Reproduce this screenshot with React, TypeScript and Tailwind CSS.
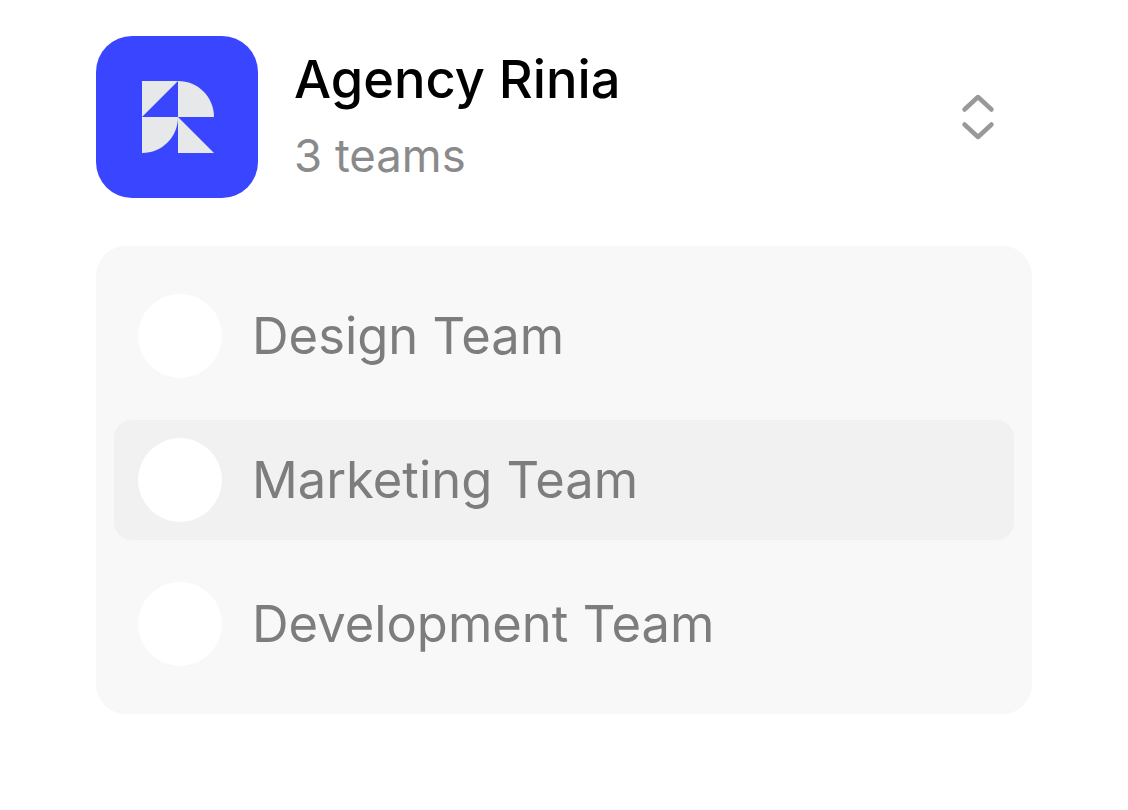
const teams = [
  { name: "Design Team", active: false },
  { name: "Marketing Team", active: true },
  { name: "Development Team", active: false },
];

const Logo = () => (
  <div className="flex h-[162px] w-[162px] shrink-0 items-center justify-center rounded-[36px] bg-[#3a45ff]">
    <svg className="ml-[2px]" width="72" height="72" viewBox="0 0 72 72" fill="#e6e8ea">
      <path d="M0 0H36L0 36Z" />
      <path d="M36 0C56 0 72 16 72 36H36Z" />
      <path d="M0 36H36C36 56 20 72 0 72Z" />
      <path d="M36 36L72 72H36Z" />
    </svg>
  </div>
);

const Chevrons = () => (
  <svg width="36" height="48" viewBox="0 0 36 48" fill="none" stroke="#999999" strokeWidth="4.500" strokeLinecap="round" strokeLinejoin="round">
    <path d="M4.500 16.500L18 4L31.500 16.500" />
    <path d="M4.500 31.500L18 44L31.500 31.500" />
  </svg>
);

export default function App() {
  return (
    <div className="flex min-h-[810px] flex-col gap-[48px] bg-white px-[96px] pt-[36px] font-['Inter',sans-serif]">
      <div className="flex items-center">
        <Logo />
        <div className="ml-[36px] flex flex-1 flex-col gap-[14px] pb-[7px]">
          <span className="text-[52.400px] leading-[70px] font-medium text-black">Agency Rinia</span>
          <span className="text-[45.500px] leading-[56px] text-[#8a8a8a]">3 teams</span>
        </div>
        <div className="mr-[36px]">
          <Chevrons />
        </div>
      </div>
      <div className="flex flex-col gap-[24px] rounded-[30px] bg-[#f8f8f8] px-[18px] py-[30px]">
        {teams.map((team) => (
          <div
            key={team.name}
            className={`flex h-[120px] items-center gap-[30px] rounded-[18px] pl-[24px] ${team.active ? "bg-[#f1f1f1]" : ""}`}
          >
            <div className="h-[84px] w-[84px] rounded-full bg-white" />
            <span className="text-[50.700px] text-[#7d7d7d]">{team.name}</span>
          </div>
        ))}
      </div>
    </div>
  );
}
